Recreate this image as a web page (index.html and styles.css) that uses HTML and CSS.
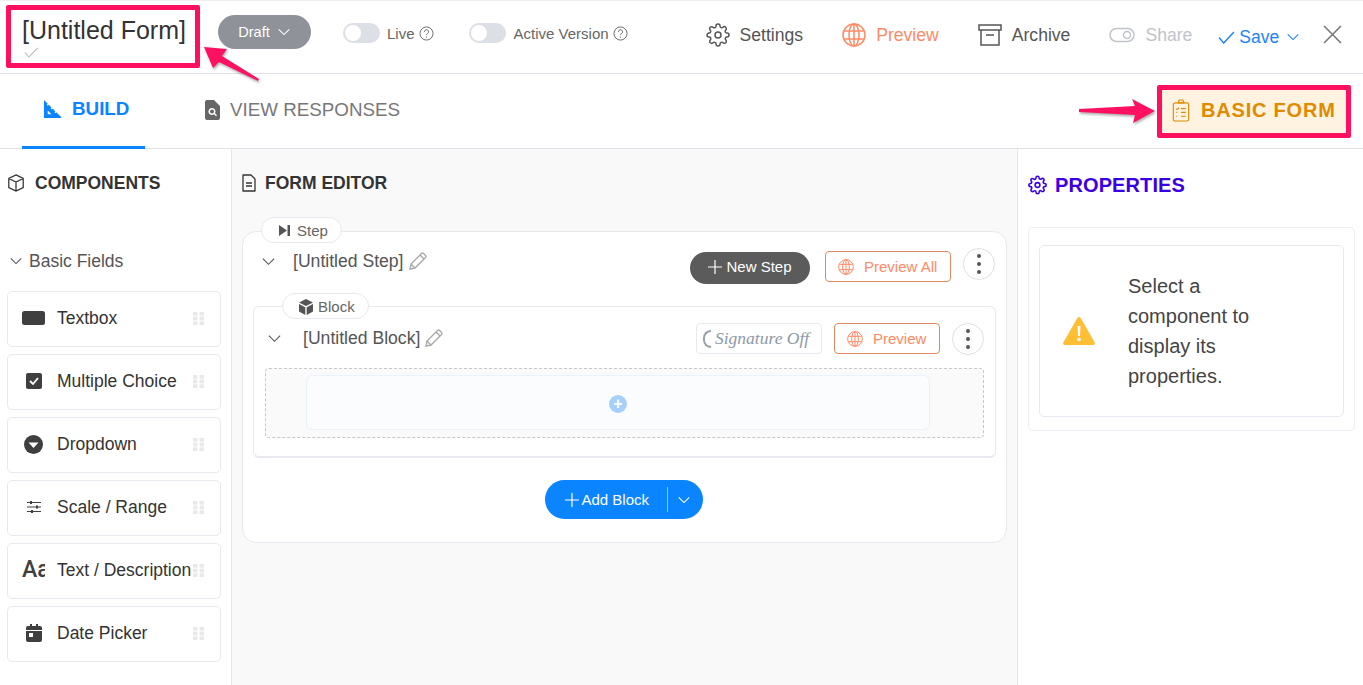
FILE: index.html
```html
<!DOCTYPE html>
<html lang="en">

<head>
    <meta charset="UTF-8">
    <meta name="viewport" content="width=device-width, initial-scale=1.0">
    <title>Form Builder</title>
    <link rel="stylesheet" href="styles.css">
</head>

<body>
    <svg class="sprite" width="0" height="0">
        <symbol id="chev" viewBox="0 0 16 16"><path d="M2 5l6 6 6-6" fill="none" stroke="currentColor" stroke-width="1.200"/></symbol>
        <symbol id="plus" viewBox="0 0 14 14"><path d="M7 0v14M0 7h14" stroke="currentColor" stroke-width="1.200"/></symbol>
        <symbol id="gear" viewBox="0 0 24 24"><g fill="none" stroke="currentColor"><circle cx="12" cy="12" r="3"/><path d="M19.4 15a1.65 1.65 0 0 0 .33 1.82l.06.06a2 2 0 0 1 0 2.83 2 2 0 0 1-2.83 0l-.06-.06a1.65 1.65 0 0 0-1.82-.33 1.65 1.65 0 0 0-1 1.51V21a2 2 0 0 1-2 2 2 2 0 0 1-2-2v-.09A1.65 1.65 0 0 0 9 19.4a1.65 1.65 0 0 0-1.82.33l-.06.06a2 2 0 0 1-2.83 0 2 2 0 0 1 0-2.83l.06-.06a1.65 1.65 0 0 0 .33-1.82 1.65 1.65 0 0 0-1.51-1H3a2 2 0 0 1-2-2 2 2 0 0 1 2-2h.09A1.65 1.65 0 0 0 4.6 9a1.65 1.65 0 0 0-.33-1.82l-.06-.06a2 2 0 0 1 0-2.83 2 2 0 0 1 2.83 0l.06.06a1.65 1.65 0 0 0 1.82.33H9a1.65 1.65 0 0 0 1-1.51V3a2 2 0 0 1 2-2 2 2 0 0 1 2 2v.09a1.65 1.65 0 0 0 1 1.51 1.65 1.65 0 0 0 1.82-.33l.06-.06a2 2 0 0 1 2.83 0 2 2 0 0 1 0 2.83l-.06.06a1.65 1.65 0 0 0-.33 1.82V9a1.65 1.65 0 0 0 1.51 1H21a2 2 0 0 1 2 2 2 2 0 0 1-2 2h-.09a1.65 1.65 0 0 0-1.51 1z"/></g></symbol>
        <symbol id="globe" viewBox="0 0 24 24"><g fill="none" stroke="currentColor" stroke-width="1.500"><circle cx="12" cy="12" r="11"/><ellipse cx="12" cy="12" rx="5" ry="11"/><path d="M12 1v22M2 8h20M2 16h20"/></g></symbol>
        <symbol id="pencil" viewBox="0 0 18 18"><path d="M1 17l1-5L12.500 1.500a1.500 1.500 0 0 1 2.100 0l1.900 1.900a1.500 1.500 0 0 1 0 2.100L6 16zM2 12l4 4M11 3l4 4" fill="none" stroke="currentColor" stroke-width="1.400"/></symbol>
        <symbol id="grip" viewBox="0 0 10 12"><g fill="#e8e8e8"><rect width="4" height="3.400"/><rect x="6" width="4" height="3.400"/><rect y="4.300" width="4" height="3.400"/><rect x="6" y="4.300" width="4" height="3.400"/><rect y="8.600" width="4" height="3.400"/><rect x="6" y="8.600" width="4" height="3.400"/></g></symbol>
        <symbol id="help" viewBox="0 0 16 16"><circle cx="8" cy="8" r="7" fill="none" stroke="currentColor"/><path d="M5.800 6.200a2.200 2.200 0 1 1 3.300 1.900c-.8.500-1.100.9-1.100 1.700" fill="none" stroke="currentColor"/><circle cx="8" cy="11.800" r=".7" fill="currentColor"/></symbol>
    </svg>

    <div class="page">
        <header class="topbar">
            <div class="title_box">
                <div class="title_txt">[Untitled Form]</div>
                <svg class="title_check" viewBox="0 0 16 12"><path d="M1 6l4 5 10-10" fill="none" stroke="#b5b5b5" stroke-width="1.100"/></svg>
            </div>
            <div class="draft">Draft <svg class="ic14"><use href="#chev"/></svg></div>
            <div class="toggle_wrap live">
                <span class="toggle"></span><span>Live</span><svg class="ic15"><use href="#help"/></svg>
            </div>
            <div class="toggle_wrap active">
                <span class="toggle"></span><span>Active Version</span><svg class="ic15"><use href="#help"/></svg>
            </div>
            <div class="tool settings"><svg class="ic24"><use href="#gear"/></svg>Settings</div>
            <div class="tool preview"><svg class="ic24"><use href="#globe"/></svg>Preview</div>
            <div class="tool archive">
                <svg class="ic24" viewBox="0 0 24 24"><g fill="none" stroke="#555" stroke-width="1.500"><rect x="1" y="2" width="22" height="5"/><path d="M3 7v15h18V7M8 12h8"/></g></svg>Archive
            </div>
            <div class="tool share">
                <svg class="ic_share" viewBox="0 0 26 16"><rect x="1" y="1.500" width="24" height="13" rx="6.500" fill="none" stroke="#c0c4cc" stroke-width="1.500"/><circle cx="18" cy="8" r="3.500" fill="none" stroke="#c0c4cc" stroke-width="1.500"/></svg>Share
            </div>
            <div class="save">
                <svg class="ic_check" viewBox="0 0 18 14"><path d="M1 7l5 6L17 1" fill="none" stroke="currentColor" stroke-width="1.500"/></svg>Save<svg class="ic14"><use href="#chev"/></svg>
            </div>
            <svg class="close" viewBox="0 0 18 18"><path d="M1 1l16 16M17 1L1 17" stroke="#777" stroke-width="1.500"/></svg>
        </header>

        <nav class="tabs">
            <div class="tab on">
                <svg class="ic_build" viewBox="0 0 20 20"><path d="M1 0L5 4L4 5L5 6L6 5L9 8L8 9L9 10L10 9L13 12L12 13L13 14L14 13L19 18V19H1ZM5 11V15H9Z" fill="#0a84ff" fill-rule="evenodd"/></svg>BUILD
            </div>
            <div class="tab">
                <svg class="ic_resp" viewBox="0 0 15 20"><path d="M2 0h7l6 6v12a2 2 0 0 1-2 2H2a2 2 0 0 1-2-2V2a2 2 0 0 1 2-2zM7 8a3.500 3.500 0 1 0 2 6.300l2 2 1-1-2-2A3.500 3.500 0 0 0 7 8zm0 1.500a2 2 0 1 1 0 4 2 2 0 0 1 0-4z" fill="#666" fill-rule="evenodd"/></svg>VIEW RESPONSES
            </div>
            <div class="basic">
                <svg class="ic_basic" viewBox="0 0 18 24"><g fill="none" stroke="#e08a00" stroke-width="1.200"><rect x="1" y="4" width="16" height="19" rx="2"/><path d="M6 4l1-3h4l1 3zM4 10l1 1 2-2M9 10h5M4 14h1M9 14h5M4 18h1M9 18h5"/></g></svg>BASIC FORM
            </div>
        </nav>

        <div class="main">
            <aside class="left">
                <h3 class="head">
                    <svg class="ic18" viewBox="0 0 20 20"><path d="M10 1l8 4v10l-8 4-8-4V5zM2 5l8 4 8-4M10 9v10" fill="none" stroke="#333" stroke-width="1.400"/></svg>COMPONENTS
                </h3>
                <div class="group"><svg class="ic14"><use href="#chev"/></svg>Basic Fields</div>
                <div class="item">
                    <span class="item_ic"><svg width="23" height="14"><rect width="23" height="14" rx="2.500" fill="#3f3f3f"/></svg></span>
                    <span class="item_txt">Textbox</span><svg class="grip"><use href="#grip"/></svg>
                </div>
                <div class="item">
                    <span class="item_ic"><svg width="16" height="16" viewBox="0 0 16 16"><rect width="16" height="16" rx="2" fill="#3f3f3f"/><path d="M4 8l3 3 5-6" fill="none" stroke="#fff" stroke-width="1.800"/></svg></span>
                    <span class="item_txt">Multiple Choice</span><svg class="grip"><use href="#grip"/></svg>
                </div>
                <div class="item">
                    <span class="item_ic"><svg width="19" height="19" viewBox="0 0 19 19"><circle cx="9.500" cy="9.500" r="9.500" fill="#3f3f3f"/><path d="M4.500 7.500h10l-5 5.500z" fill="#fff"/></svg></span>
                    <span class="item_txt">Dropdown</span><svg class="grip"><use href="#grip"/></svg>
                </div>
                <div class="item">
                    <span class="item_ic"><svg width="16" height="14" viewBox="0 0 16 14"><path d="M1 2.500h14M1 7h14M1 11.500h14" stroke="#3f3f3f" stroke-width="1.100"/><rect x="4" y="1" width="2" height="3" fill="#3f3f3f"/><rect x="10" y="5.500" width="2" height="3" fill="#3f3f3f"/><rect x="5" y="10" width="2" height="3" fill="#3f3f3f"/></svg></span>
                    <span class="item_txt">Scale / Range</span><svg class="grip"><use href="#grip"/></svg>
                </div>
                <div class="item">
                    <span class="item_ic aa">Aa</span>
                    <span class="item_txt">Text / Description</span><svg class="grip"><use href="#grip"/></svg>
                </div>
                <div class="item">
                    <span class="item_ic"><svg width="16" height="18" viewBox="0 0 16 18"><path d="M2 2h2V0h2v2h4V0h2v2h2a2 2 0 0 1 2 2v12a2 2 0 0 1-2 2H2a2 2 0 0 1-2-2V4a2 2 0 0 1 2-2zM0 6v1h16V6zM3 9v4h4V9z" fill="#3f3f3f" fill-rule="evenodd"/></svg></span>
                    <span class="item_txt">Date Picker</span><svg class="grip"><use href="#grip"/></svg>
                </div>
            </aside>

            <section class="center">
                <h3 class="head">
                    <svg class="ic_doc" viewBox="0 0 14 18"><path d="M1 1h8l4 4v12H1zM4 9h6M4 12h6" fill="none" stroke="#333" stroke-width="1.300" stroke-linejoin="round"/></svg>FORM EDITOR
                </h3>
                <div class="step">
                    <span class="pill step_pill">
                        <svg width="11" height="11" viewBox="0 0 11 11"><path d="M0 0l8 5.500L0 11zM8.500 0H11v11H8.500z" fill="#555"/></svg>Step
                    </span>
                    <div class="step_head">
                        <svg class="ic_chev"><use href="#chev"/></svg>
                        <span class="name">[Untitled Step]</span>
                        <svg class="ic_pen"><use href="#pencil"/></svg>
                        <div class="btn_new"><svg class="plus"><use href="#plus"/></svg>New Step</div>
                        <div class="btn_line all"><svg class="ic16"><use href="#globe"/></svg>Preview All</div>
                        <div class="kebab up"><i></i><i></i><i></i></div>
                    </div>
                    <div class="block">
                        <span class="pill block_pill">
                            <svg width="16" height="16" viewBox="0 0 16 16"><path d="M8 0l7 3.500-7 3.500-7-3.500zM1 5l6.300 3.200V16L1 12.500zM15 5L8.700 8.200V16l6.300-3.500z" fill="#555"/></svg>Block
                        </span>
                        <div class="block_head">
                            <svg class="ic_chev"><use href="#chev"/></svg>
                            <span class="name">[Untitled Block]</span>
                            <svg class="ic_pen"><use href="#pencil"/></svg>
                            <div class="sign"><span class="sign_c"></span>Signature Off</div>
                            <div class="btn_line prev"><svg class="ic16"><use href="#globe"/></svg>Preview</div>
                            <div class="kebab"><i></i><i></i><i></i></div>
                        </div>
                        <div class="drop">
                            <div class="drop_in"><span class="drop_add">+</span></div>
                        </div>
                    </div>
                    <div class="add_row">
                        <div class="add">
                            <svg class="plus"><use href="#plus"/></svg>Add Block<span class="add_sep"></span><svg class="ic14"><use href="#chev"/></svg>
                        </div>
                    </div>
                </div>
            </section>

            <aside class="right">
                <h3 class="prop_head">
                    <svg class="ic_gear"><use href="#gear"/></svg>PROPERTIES
                </h3>
                <div class="prop_out">
                    <div class="prop_in">
                        <svg class="warn" viewBox="0 0 32 28"><path d="M16 0a2 2 0 0 1 1.700 1l14 24.500A1.700 1.700 0 0 1 30.200 28H1.800a1.700 1.700 0 0 1-1.500-2.500L14.300 1A2 2 0 0 1 16 0z" fill="#ffbe33"/><path d="M14.500 9h3l-.5 10h-2z" fill="#fff"/><circle cx="16" cy="22.500" r="1.800" fill="#fff"/></svg>
                        <p class="prop_txt">Select a component to display its properties.</p>
                    </div>
                </div>
            </aside>
        </div>

        <!-- annotation arrows -->
        <svg class="arrow arrow_a" viewBox="0 0 56 39"><path d="M0 5l23 2-5 7 37 23-1 2-39-19-6 6z" fill="#ff1060"/></svg>
        <svg class="arrow arrow_b" viewBox="0 0 76 27"><path d="M0 12l56-3-3-7 23 12-22 12 2-8-56-3z" fill="#ff1060"/></svg>
    </div>
</body>

</html>
```

FILE: styles.css
```css
* {
    margin: 0;
    padding: 0;
    box-sizing: border-box;
}

body {
    font-family: "Liberation Sans", Arial, sans-serif;
    color: #333;
    background-color: #fff;
}

.sprite {
    position: absolute;
}

.page {
    position: relative;
    overflow: hidden;
    width: 1363px;
    height: 685px;
}

/* top bar */
.topbar {
    display: flex;
    align-items: flex-start;
    height: 74px;
    padding-left: 6px;
    border-top: 1px solid #efefef;
    border-bottom: 1px solid #dfe1e6;
}

.title_box {
    flex: none;
    width: 194px;
    height: 63px;
    margin-top: 4px;
    padding: 6px 0 0 11px;
    border: 5px solid #ff0f5f;
    border-radius: 2px;
}

.title_txt {
    font-size: 25px;
    line-height: 28px;
    white-space: nowrap;
    color: #333;
}

.title_check {
    display: block;
    width: 15px;
    height: 11px;
    margin: 3px 0 0 2px;
}

.draft {
    display: flex;
    flex: none;
    align-items: center;
    justify-content: center;
    gap: 7px;
    width: 93px;
    height: 34px;
    margin: 14px 0 0 18px;
    border-radius: 17px;
    background-color: #8f9298;
    color: #fff;
    font-size: 14.500px;
}

.ic14 {
    width: 14px;
    height: 14px;
}

.ic15 {
    width: 15px;
    height: 15px;
    color: #666;
}

.ic16 {
    width: 16px;
    height: 16px;
}

.ic18 {
    width: 18px;
    height: 18px;
}

.ic24 {
    width: 24px;
    height: 24px;
    stroke-width: 1.500;
}

.toggle_wrap {
    display: flex;
    flex: none;
    align-items: center;
    height: 20px;
    margin-top: 22px;
    font-size: 15px;
    color: #666;
}

.toggle_wrap span:nth-child(2) {
    margin: 0 4px 0 7px;
}

.live {
    margin-left: 32px;
}

.active {
    margin-left: 35px;
}

.active span:nth-child(2) {
    margin-left: 8px;
}

.toggle {
    position: relative;
    width: 37px;
    height: 20px;
    border-radius: 10px;
    background-color: #dcdfe6;
}

.toggle::after {
    content: "";
    position: absolute;
    top: 2px;
    left: 2px;
    width: 16px;
    height: 16px;
    border-radius: 50%;
    background-color: #fff;
}

.tool {
    display: flex;
    flex: none;
    align-items: center;
    height: 24px;
    margin-top: 22px;
    font-size: 17.600px;
    color: #555;
}

.tool svg {
    margin-right: 10px;
}

.settings {
    margin-left: 78px;
}

.preview {
    margin-left: 39px;
    color: #ff8a65;
}

.archive {
    margin-left: 39px;
}

.share {
    margin-left: 39px;
    color: #c0c4cc;
}

.ic_share {
    width: 26px;
    height: 16px;
}

.save {
    display: flex;
    flex: none;
    align-items: center;
    height: 24px;
    margin: 24px 0 0 26px;
    font-size: 17.500px;
    color: #1a82ff;
}

.ic_check {
    width: 17px;
    height: 13px;
    margin-right: 4px;
}

.save .ic14 {
    margin-left: 7px;
}

.close {
    flex: none;
    width: 19px;
    height: 19px;
    margin: 24px 0 0 23px;
}

/* tabs */
.tabs {
    display: flex;
    align-items: stretch;
    height: 75px;
    padding-left: 22px;
    border-bottom: 1px solid #dfe1e6;
}

.tab {
    display: flex;
    align-items: center;
    height: 75px;
    padding-bottom: 4px;
    font-size: 18.800px;
    color: #777;
}

.tab.on {
    width: 123px;
    margin-right: 60px;
    padding: 0 0 2px 21px;
    border-bottom: 3px solid #0a84ff;
    font-weight: bold;
    color: #0a84ff;
}

.ic_build {
    width: 19px;
    height: 19px;
    margin-right: 10px;
}

.ic_resp {
    width: 15px;
    height: 20px;
    margin-right: 10px;
}

.basic {
    display: flex;
    align-items: center;
    width: 194px;
    height: 53px;
    margin: 11px 12px 0 auto;
    padding: 0 0 2px 10px;
    border: 5px solid #ff0f5f;
    border-radius: 2px;
    background-color: #fdf3e0;
    font-size: 20px;
    font-weight: bold;
    letter-spacing: .8px;
    color: #e08a00;
}

.ic_basic {
    width: 18px;
    height: 23px;
    margin-right: 11px;
}

/* three columns */
.main {
    display: grid;
    grid-template-columns: 232px 785px 1fr;
    height: 536px;
}

.left {
    padding: 24px 10px 0 7px;
    border-right: 1px solid #e6e6ee;
}

.head {
    display: flex;
    align-items: center;
    gap: 10px;
    height: 20px;
    font-size: 17.500px;
    font-weight: bold;
    color: #333;
}

.group {
    display: flex;
    align-items: center;
    gap: 6px;
    margin: 56px 0 18px 2px;
    font-size: 17.500px;
    line-height: 24px;
    color: #555;
}

.item {
    display: flex;
    align-items: center;
    width: 214px;
    height: 56px;
    margin-bottom: 7px;
    padding: 0 0 2px 14px;
    border: 1px solid #e8e8ef;
    border-radius: 5px;
    font-size: 17.500px;
    color: #333;
}

.item_ic {
    display: flex;
    flex: none;
    align-items: center;
    justify-content: center;
    width: 23px;
    margin-right: 12px;
}

.aa {
    overflow: hidden;
    justify-content: flex-start;
    height: 20px;
    font-family: Roboto, sans-serif;
    font-size: 23px;
    font-weight: 500;
    line-height: 22px;
    color: #3f3f3f;
}

.item_txt {
    flex: none;
    width: 136px;
    white-space: nowrap;
}

.grip {
    flex: none;
    width: 11px;
    height: 13px;
}

.center {
    padding: 24px 10px 0 10px;
    background-color: #f9f9f9;
}

.ic_doc {
    width: 14px;
    height: 18px;
    margin-right: -1px;
}

.step {
    position: relative;
    width: 765px;
    height: 312px;
    margin-top: 38px;
    padding: 0 10px;
    border: 1px solid #e8e8ef;
    border-radius: 14px;
    background-color: #fff;
}

.pill {
    position: absolute;
    display: flex;
    align-items: center;
    height: 26px;
    padding-top: 1px;
    border: 1px solid #e8e8ef;
    border-radius: 13px;
    background-color: #fff;
    font-size: 15px;
    color: #666;
}

.step_pill {
    top: -15px;
    left: 18px;
    gap: 7px;
    width: 81px;
    padding-left: 17px;
}

.block_pill {
    top: -14px;
    left: 28px;
    gap: 4px;
    width: 87px;
    padding-left: 15px;
}

.step_head {
    display: flex;
    align-items: flex-start;
    height: 74px;
    padding-left: 8px;
}

.ic_chev {
    flex: none;
    width: 15px;
    height: 15px;
    margin-top: 22px;
    color: #555;
}

.name {
    margin: 19px 5px 0 17px;
    font-size: 17.600px;
    line-height: 20px;
    white-space: nowrap;
    color: #555;
}

.ic_pen {
    flex: none;
    width: 18px;
    height: 18px;
    margin-top: 20px;
    color: #aaa;
}

.btn_new {
    display: flex;
    align-items: center;
    justify-content: center;
    width: 120px;
    height: 32px;
    margin: 20px 0 0 auto;
    padding-bottom: 3px;
    border-radius: 16px;
    background-color: #5b5b5b;
    font-size: 15px;
    color: #fff;
}

.plus {
    width: 14px;
    height: 14px;
    margin-right: 4px;
}

.btn_line {
    display: flex;
    align-items: center;
    height: 31px;
    padding-left: 12px;
    border: 1px solid #e08a60;
    border-radius: 4px;
    font-size: 15px;
    color: #ff8a65;
}

.btn_line svg {
    margin-right: 10px;
}

.all {
    width: 126px;
    margin: 19px 0 0 15px;
}

.prev {
    width: 106px;
    margin: 17px 0 0 12px;
}

.kebab {
    display: flex;
    flex-direction: column;
    align-items: center;
    justify-content: center;
    gap: 4px;
    flex: none;
    width: 32px;
    height: 32px;
    margin: 17px 0 0 12px;
    border: 1px solid #dcdfe6;
    border-radius: 50%;
}

.kebab.up {
    margin: 16px 1px 0 12px;
}

.kebab i {
    width: 4px;
    height: 4px;
    border-radius: 50%;
    background-color: #555;
}

.block {
    position: relative;
    height: 152px;
    padding: 0 11px;
    border: 1px solid #e8e8ef;
    border-bottom: 2px solid #e6e9ee;
    border-radius: 6px;
}

.block_head {
    display: flex;
    align-items: flex-start;
    height: 61px;
    padding-left: 2px;
}

.block_head .ic_chev {
    margin-top: 24px;
}

.block_head .name {
    margin: 21px 5px 0 21px;
}

.block_head .ic_pen {
    margin-top: 22px;
}

.sign {
    display: flex;
    align-items: center;
    flex: none;
    width: 126px;
    height: 31px;
    margin: 16px 0 0 auto;
    padding-left: 6px;
    border: 1px solid #e8e8ef;
    border-radius: 4px;
    font-family: "Liberation Serif", serif;
    font-size: 17.500px;
    font-style: italic;
    white-space: nowrap;
    color: #8d99a8;
}

.sign_c {
    width: 8px;
    height: 18px;
    margin-right: 4px;
    border: 2px solid #9aa3ad;
    border-right: 0;
    border-radius: 8px 0 0 8px;
}

.block_head .prev {
    margin-top: 16px;
}

.block_head .kebab {
    margin-top: 16px;
}

.drop {
    height: 70px;
    padding: 6px 53px 0 40px;
    border: 1px dashed #c8c8c8;
    border-radius: 4px;
    background-color: #fafafa;
}

.drop_in {
    display: flex;
    align-items: center;
    justify-content: center;
    height: 55px;
    border: 1px solid #eaf2fb;
    border-radius: 6px;
    background-color: #fbfcfe;
}

.drop_add {
    width: 18px;
    height: 18px;
    margin-top: 3px;
    border-radius: 50%;
    background-color: #a6d0fb;
    font-size: 16px;
    font-weight: bold;
    line-height: 18px;
    text-align: center;
    color: #fff;
}

.add_row {
    display: flex;
    justify-content: center;
    margin-top: 22px;
    padding-right: 2px;
}

.add {
    display: flex;
    align-items: center;
    width: 158px;
    height: 39px;
    padding-left: 20px;
    border-radius: 20px;
    background-color: #0a84ff;
    font-size: 15px;
    color: #fff;
}

.add .plus {
    margin-right: 3px;
}

.add_sep {
    width: 1px;
    height: 25px;
    margin: 0 9px 0 18px;
    background-color: #8cc4ff;
}

.right {
    padding: 24px 8px 0 10px;
    border-left: 1px solid #e6e6ee;
}

.prop_head {
    display: flex;
    align-items: center;
    gap: 8px;
    height: 24px;
    font-size: 20px;
    font-weight: bold;
    letter-spacing: .1px;
    color: #3a00e5;
}

.ic_gear {
    width: 19px;
    height: 20px;
    stroke-width: 2;
}

.prop_out {
    height: 204px;
    margin-top: 30px;
    padding: 17px 10px 0;
    border: 1px solid #eeeef4;
    border-radius: 5px;
}

.prop_in {
    display: flex;
    align-items: center;
    height: 172px;
    padding-left: 23px;
    border: 1px solid #e8e8f2;
    border-radius: 5px;
}

.warn {
    flex: none;
    width: 32px;
    height: 28px;
    margin-right: 33px;
}

.prop_txt {
    width: 170px;
    font-size: 20px;
    line-height: 30px;
    color: #444;
}

/* annotation arrows */
.arrow {
    position: absolute;
    filter: drop-shadow(1px 2px 1px rgba(0, 0, 0, .3));
}

.arrow_a {
    top: 42px;
    left: 204px;
    width: 56px;
    height: 39px;
}

.arrow_b {
    top: 97px;
    left: 1079px;
    width: 76px;
    height: 27px;
}
```
